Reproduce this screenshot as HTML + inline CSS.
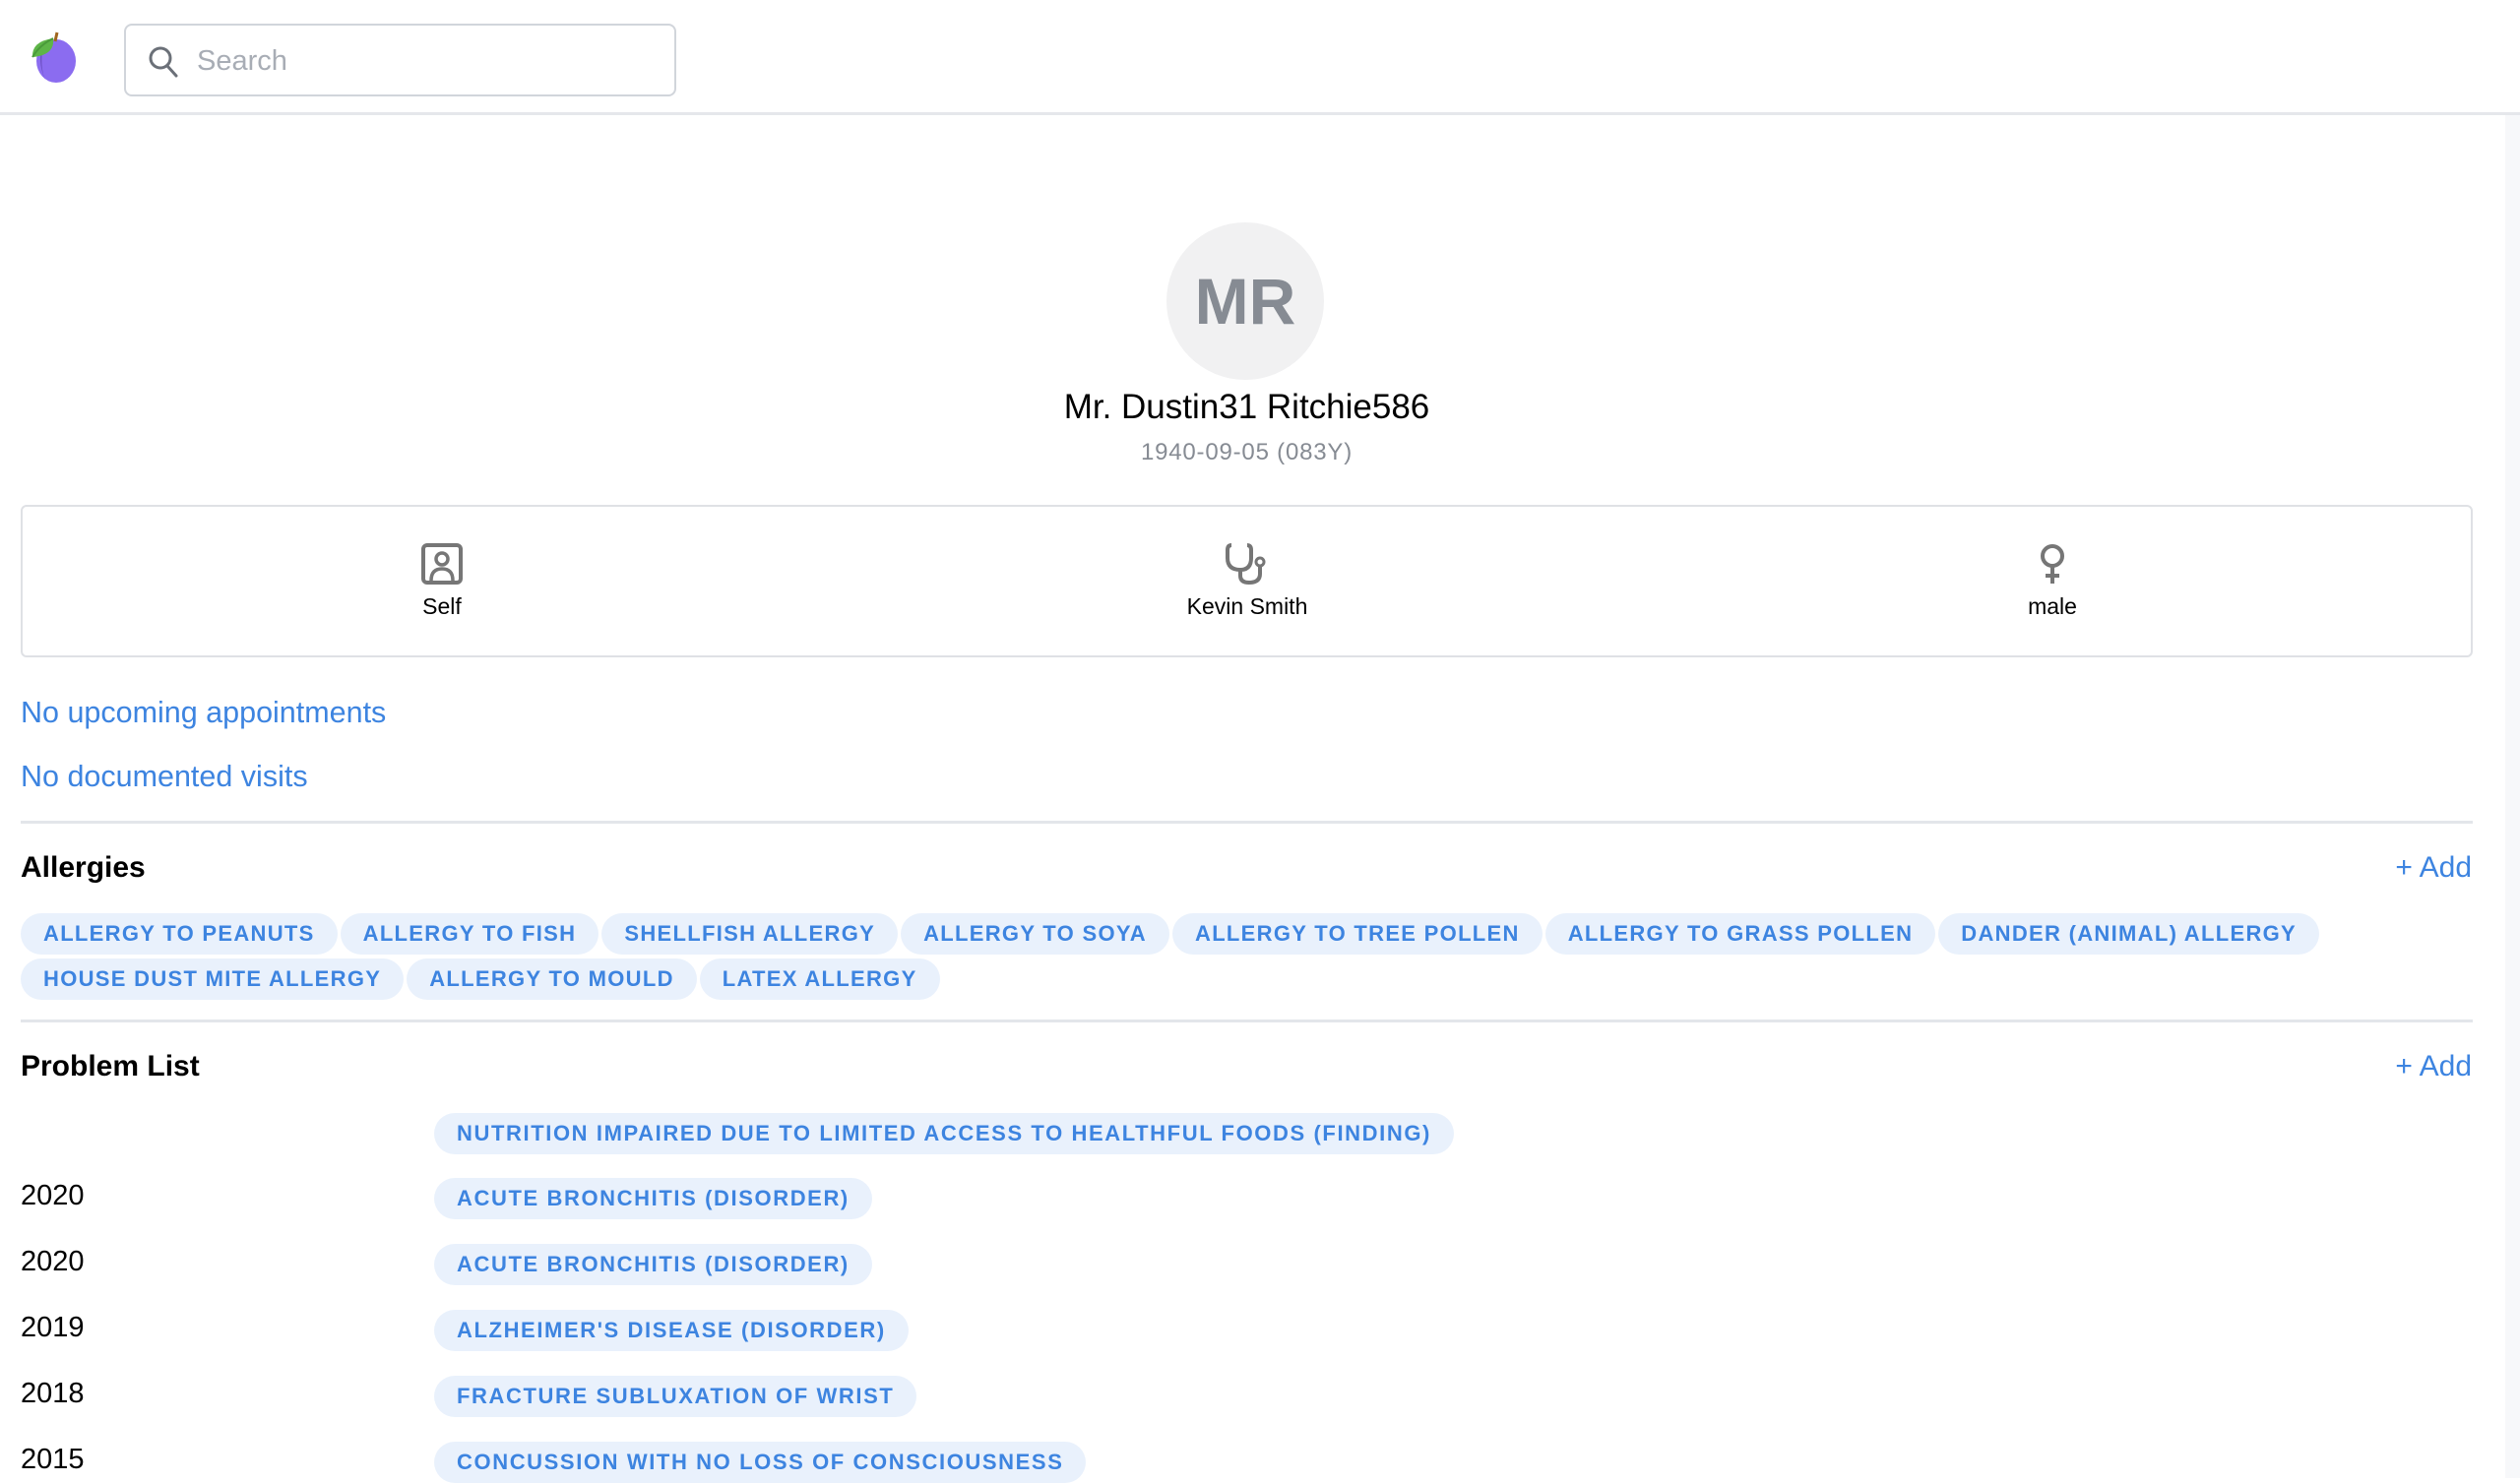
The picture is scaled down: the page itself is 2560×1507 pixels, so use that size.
<!DOCTYPE html>
<html><head><meta charset="utf-8"><style>
*{box-sizing:border-box;margin:0;padding:0}
body{width:2560px;height:1502px;overflow:hidden;background:#fff;font-family:"Liberation Sans",sans-serif;position:relative;color:#000}
.hdr{position:absolute;left:0;top:0;width:2560px;height:117px;border-bottom:3px solid #e5e7eb;background:#fff}
.search{position:absolute;left:126px;top:24px;width:561px;height:74px;border:2px solid #d1d5db;border-radius:8px}
.search span{position:absolute;left:72px;top:20px;font-size:29px;color:#a8adb5}
.scroll{position:absolute;left:2545px;top:117px;width:15px;height:1385px;background:#f7f8fa}
.avatar{position:absolute;left:1185px;top:226px;width:160px;height:160px;border-radius:50%;background:#f1f1f2;color:#868b93;font-weight:bold;font-size:66px;text-align:center;line-height:160px}
.name{position:absolute;left:0;width:2533px;text-align:center;top:394px;font-size:35px}
.dob{position:absolute;left:0;width:2533px;text-align:center;top:446px;font-size:24px;color:#868b93;letter-spacing:.8px}
.card{position:absolute;left:21px;top:513px;width:2491px;height:155px;border:2px solid #dfe1e5;border-radius:6px}
.col{position:absolute;top:36px;width:300px;margin-left:-150px;text-align:center;font-size:23px}
.col svg{display:block;margin:0 auto 8px}
.link{position:absolute;left:21px;font-size:30.5px;color:#3d84e0}
.hr{position:absolute;left:21px;width:2491px;height:3px;background:#e3e6ea}
.h{position:absolute;left:21px;font-size:30px;font-weight:bold}
.add{position:absolute;right:49px;font-size:30px;color:#3d84e0}
.tags{position:absolute;left:21px;width:2491px}
.tag{display:inline-block;height:42px;line-height:42px;padding:0 23px;border-radius:21px;background:#e9f1fc;color:#3d84e0;font-weight:bold;font-size:22px;letter-spacing:1.3px;margin:0 3px 4px 0;white-space:nowrap}
.row{position:absolute;left:0;width:2000px;height:42px}
.row .y{position:absolute;left:21px;top:2px;font-size:29px}
.row .tag{position:absolute;left:441px;top:0;letter-spacing:1.6px}
</style></head><body>
<div class="hdr">
<svg style="position:absolute;left:30px;top:30px" width="50" height="54" viewBox="0 0 50 54"><ellipse cx="27" cy="32" rx="20" ry="22" fill="#8b6cf0"/><path d="M14 16 Q7 30 16 52 Q10 36 14 16Z" fill="#6f52c6"/><path d="M28 3 L26 12" stroke="#a0661f" stroke-width="3"/><path d="M3 28 Q2 12 24 9 Q26 26 3 28Z" fill="#5eb548"/><path d="M3 28 Q10 16 24 9" stroke="#4a9a3a" stroke-width="2" fill="none"/></svg>
<div class="search"><svg style="position:absolute;left:22px;top:20px" width="32" height="34" viewBox="0 0 32 34"><circle cx="13" cy="13" r="10" fill="none" stroke="#6b7078" stroke-width="3"/><path d="M20 21 L29 31" stroke="#6b7078" stroke-width="3" stroke-linecap="round"/></svg><span>Search</span></div>
</div>
<div class="scroll"></div>
<div class="avatar">MR</div>
<div class="name">Mr. Dustin31 Ritchie586</div>
<div class="dob">1940-09-05 (083Y)</div>
<div class="card">
<div class="col" style="left:426px"><svg width="44" height="44" viewBox="0 0 44 44"><rect x="3" y="3" width="38" height="38" rx="4" fill="none" stroke="#767676" stroke-width="4"/><circle cx="22" cy="17" r="6" fill="none" stroke="#767676" stroke-width="3.5"/><path d="M11 39 Q11 27 22 27 Q33 27 33 39" fill="none" stroke="#767676" stroke-width="3.5"/></svg>Self</div>
<div class="col" style="left:1244px"><svg width="48" height="44" viewBox="0 0 48 44"><path d="M8 3 Q4 3 4 8 L4 16 Q4 28 17 28 Q28 28 28 16 L28 8 Q28 3 24 3" fill="none" stroke="#767676" stroke-width="4"/><path d="M17 28 L17 34 Q17 41 26 41 Q37 41 37 32 L37 24" fill="none" stroke="#767676" stroke-width="4"/><circle cx="37" cy="20" r="4" fill="none" stroke="#767676" stroke-width="3"/></svg>Kevin Smith</div>
<div class="col" style="left:2062px"><svg width="44" height="44" viewBox="0 0 44 44"><circle cx="22" cy="14" r="10" fill="none" stroke="#767676" stroke-width="4"/><path d="M22 24 L22 42 M15 34 L29 34" stroke="#767676" stroke-width="4"/></svg>male</div>
</div>
<div class="link" style="top:707px">No upcoming appointments</div>
<div class="link" style="top:772px">No documented visits</div>
<div class="hr" style="top:834px"></div>
<div class="h" style="top:865px">Allergies</div>
<div class="add" style="top:865px">+ Add</div>
<div class="tags" style="top:928px"><span class="tag">ALLERGY TO PEANUTS</span><span class="tag">ALLERGY TO FISH</span><span class="tag">SHELLFISH ALLERGY</span><span class="tag">ALLERGY TO SOYA</span><span class="tag">ALLERGY TO TREE POLLEN</span><span class="tag">ALLERGY TO GRASS POLLEN</span><span class="tag">DANDER (ANIMAL) ALLERGY</span><br><span class="tag">HOUSE DUST MITE ALLERGY</span><span class="tag">ALLERGY TO MOULD</span><span class="tag">LATEX ALLERGY</span></div>
<div class="hr" style="top:1036px"></div>
<div class="h" style="top:1067px">Problem List</div>
<div class="add" style="top:1067px">+ Add</div>
<div class="row" style="top:1131px"><span class="tag">NUTRITION IMPAIRED DUE TO LIMITED ACCESS TO HEALTHFUL FOODS (FINDING)</span></div>
<div class="row" style="top:1197px"><span class="y">2020</span><span class="tag">ACUTE BRONCHITIS (DISORDER)</span></div>
<div class="row" style="top:1264px"><span class="y">2020</span><span class="tag">ACUTE BRONCHITIS (DISORDER)</span></div>
<div class="row" style="top:1331px"><span class="y">2019</span><span class="tag">ALZHEIMER'S DISEASE (DISORDER)</span></div>
<div class="row" style="top:1398px"><span class="y">2018</span><span class="tag">FRACTURE SUBLUXATION OF WRIST</span></div>
<div class="row" style="top:1465px"><span class="y">2015</span><span class="tag">CONCUSSION WITH NO LOSS OF CONSCIOUSNESS</span></div>
</body></html>
